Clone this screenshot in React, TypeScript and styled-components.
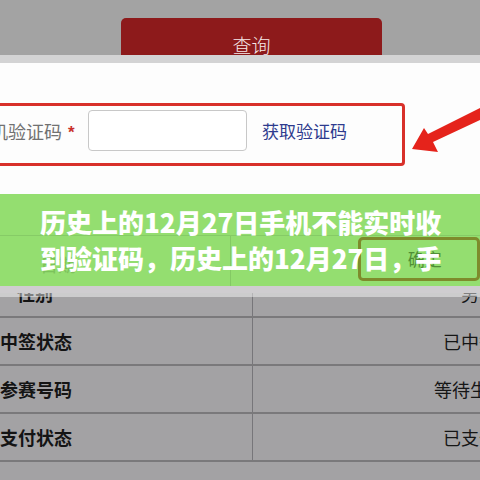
import styled, { createGlobalStyle } from "styled-components";

// Page reset: the screenshot fills the whole 480x480 window
const GlobalStyle = createGlobalStyle`
  html, body {
    margin: 0;
    padding: 0;
    background: #a3a2a4;
  }
  * {
    box-sizing: border-box;
  }
`;

const Frame = styled.div`
  position: relative;
  width: 480px;
  height: 480px;
  overflow: hidden;
  background: #a3a2a4;
  font-family: "Noto Sans CJK SC", "Noto Sans", sans-serif;
`;

// === Dimmed top area with the red query button ===
const Header = styled.header`
  height: 55px;
  background: #a3a3a3;
  overflow: hidden;
  padding: 18px 0 0 121px;
`;

const QueryButton = styled.div`
  width: 261px;
  height: 50px;
  background: #8d1a1b;
  border-radius: 5px 5px 0 0;
  display: flex;
  justify-content: center;
  padding-top: 17px;
  color: #f6e9e9;
  font-size: 19px;
  line-height: 20px;
  font-weight: 300;
`;

const Strip = styled.div`
  height: 8px;
  background: #d3d3d4;
`;

// === White modal with the highlighted verification row ===
const Panel = styled.section`
  position: relative;
  height: 131px;
  background: #fdfdfd;
  padding-top: 40px;
`;

const HighlightBox = styled.div`
  width: 427px;
  height: 63px;
  margin-left: -22px;
  padding: 4px 0 0 12px;
  border: 3px solid #d8302a;
  border-radius: 4px;
  display: flex;
  align-items: flex-start;
`;

const FieldLabel = styled.span`
  width: 69px;
  height: 41px;
  display: flex;
  align-items: center;
  justify-content: flex-end;
  color: #717171;
  font-size: 18px;
  white-space: nowrap;
`;

const Required = styled.span`
  width: 26px;
  height: 41px;
  padding: 5px 0 0 6px;
  display: flex;
  align-items: center;
  color: #c9302c;
  font-family: "Liberation Sans", sans-serif;
  font-weight: bold;
  font-size: 17px;
`;

const CodeInput = styled.div`
  width: 159px;
  height: 41px;
  border: 1px solid #c8c8c8;
  border-radius: 4px;
  background: #fff;
`;

const CodeLink = styled.span`
  height: 41px;
  margin-left: 15px;
  display: flex;
  align-items: center;
  color: #2e3b8e;
  font-size: 17px;
  white-space: nowrap;
`;

const Arrow = styled.svg`
  position: absolute;
  right: 0;
  top: 40px;
`;

// === Green title band ===
const Band = styled.section`
  position: relative;
  height: 92px;
  background: #94de70;
  padding-top: 41px;
`;

const GhostRow = styled.div`
  height: 51px;
  border-top: 1px solid #86cb66;
  display: flex;
`;

const GhostLabel = styled.div`
  width: 252px;
  padding: 15px 0 0 40px;
  color: #7cc25b;
  font-size: 18px;
  border-right: 1px solid #84c964;
`;

const GhostButton = styled.div`
  width: 130px;
  height: 44px;
  margin: 1px 0 0 127px;
  border: 3px solid #7e8b2c;
  border-radius: 5px;
  padding: 8px 0 0 47px;
  color: #4f8e36;
  font-size: 17px;
  line-height: 22px;
  white-space: nowrap;
`;

const Title = styled.h1`
  position: absolute;
  left: 40px;
  top: 10px;
  width: 410px;
  height: 72px;
  margin: 0;
  overflow: hidden;
  color: #ffffff;
  font-size: 26px;
  line-height: 36px;
  font-weight: 900;
  word-break: break-all;
`;

// === Dimmed result table ===
const Table = styled.div`
  background: #a3a2a4;
`;

const Row = styled.div<{ $cut?: boolean }>`
  position: relative;
  height: ${(p) => (p.$cut ? "32px" : "48px")};
  border-bottom: 2px solid #7a797b;
  display: flex;
  overflow: hidden;
`;

const LeftCell = styled.div<{ $cut?: boolean }>`
  width: 252px;
  display: flex;
  align-items: ${(p) => (p.$cut ? "flex-start" : "center")};
`;

const RightCell = styled.div<{ $cut?: boolean }>`
  flex: 1;
  display: flex;
  justify-content: flex-end;
  align-items: ${(p) => (p.$cut ? "flex-start" : "center")};
  border-left: 1.5px solid #77767a;
`;

const Key = styled.span<{ $cut?: boolean }>`
  width: 70px;
  text-align: center;
  margin-top: ${(p) => (p.$cut ? "-2px" : "0")};
  color: #141414;
  font-size: 18px;
  line-height: 18px;
  font-weight: bold;
  white-space: nowrap;
`;

const Value = styled.span<{ $cut?: boolean }>`
  width: 100px;
  margin-right: -40px;
  text-align: center;
  margin-top: ${(p) => (p.$cut ? "-2px" : "0")};
  color: #161616;
  font-size: 18px;
  line-height: 18px;
  white-space: nowrap;
`;

// light strip left under the band, hides the top of the first row
const Sheen = styled.div`
  position: absolute;
  left: 0;
  top: 0;
  width: 100%;
  height: 11px;
  background: linear-gradient(
    to bottom,
    #cfcdd0 0,
    #cfcdd0 7px,
    rgba(255, 255, 255, 0.45) 7px
  );
`;

const rows = [
  { key: "中签状态", value: "已中签" },
  { key: "参赛号码", value: "等待生成" },
  { key: "支付状态", value: "已支付" },
];

export default function App() {
  return (
    <Frame>
      <GlobalStyle />
      <Header>
        <QueryButton>查询</QueryButton>
      </Header>
      <Strip />

      <Panel>
        <HighlightBox>
          <FieldLabel>手机验证码</FieldLabel>
          <Required>*</Required>
          <CodeInput />
          <CodeLink>获取验证码</CodeLink>
        </HighlightBox>
        <Arrow width="68" height="56" viewBox="0 0 68 56">
          <polygon
            points="0,46 12,25 16,31 68,5 68,17 21,39 26,49"
            fill="#e5231b"
          />
        </Arrow>
      </Panel>

      <Band>
        <GhostRow>
          <GhostLabel>日期</GhostLabel>
          <GhostButton>确定</GhostButton>
        </GhostRow>
        <Title>
          历史上的12月27日手机不能实时收到验证码，历史上的12月27日，手机验证码接收问题解析
        </Title>
      </Band>

      <Table>
        <Row $cut>
          <LeftCell $cut>
            <Key $cut>性别</Key>
          </LeftCell>
          <RightCell $cut>
            <Value $cut>男</Value>
          </RightCell>
          <Sheen />
        </Row>
        {rows.map((r) => (
          <Row key={r.key}>
            <LeftCell>
              <Key>{r.key}</Key>
            </LeftCell>
            <RightCell>
              <Value>{r.value}</Value>
            </RightCell>
          </Row>
        ))}
      </Table>
    </Frame>
  );
}
